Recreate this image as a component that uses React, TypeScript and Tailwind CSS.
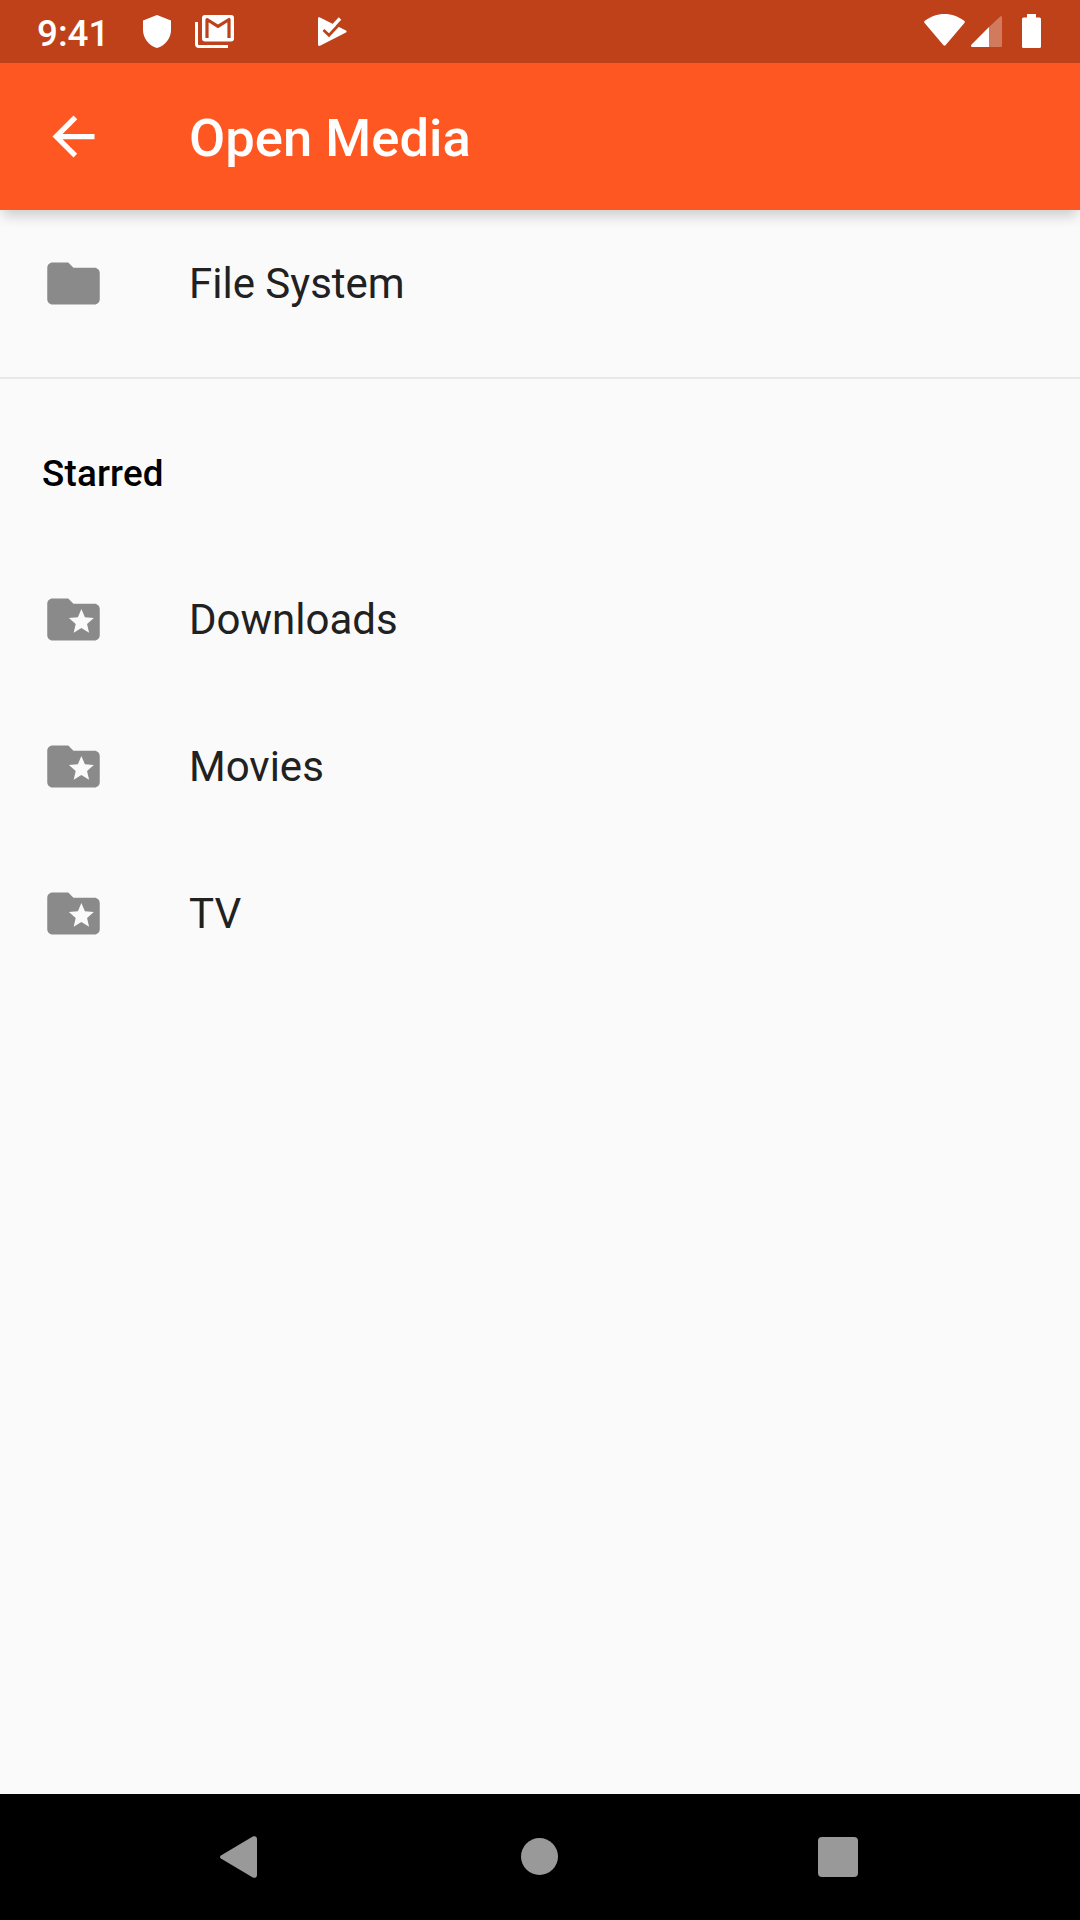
import { MdArrowBack, MdFolder, MdFolderSpecial } from 'react-icons/md';

const STARRED = ['Downloads', 'Movies', 'TV'];

interface MediaRowProps {
  label: string;
  starred?: boolean;
}

function MediaRow({ label, starred }: MediaRowProps) {
  const Icon = starred ? MdFolderSpecial : MdFolder;

  return (
    <li className="h-[147px] flex items-center pl-[42px]">
      <Icon className="size-[63px] shrink-0 text-[#8a8a8a]" />
      <span className="ml-[84px] text-[42px] leading-[49px] text-[#212121]">{label}</span>
    </li>
  );
}

function StatusBar() {
  return (
    <div className="h-[63px] bg-[#bf4119] flex items-start text-white">
      <span className="ml-[37px] mt-3 w-[106px] text-[36.75px] leading-[43px] font-medium">9:41</span>

      {/* Shield */}
      <svg className="mt-[15px] w-7 h-[33px]" viewBox="0 0 28 33" fill="currentColor">
        <path d="M14 0 28 5.6V15C28 23.5 22 30.8 14 33 6 30.8 0 23.5 0 15V5.6Z" />
      </svg>

      {/* Gmail */}
      <svg className="ml-6 mt-[15px] w-[39px] h-[33px]" viewBox="0 0 39 33" fill="none">
        <path d="M1.5 7V29a2.5 2.5 0 0 0 2.5 2.5H33" stroke="currentColor" strokeWidth="3" />
        <rect x="7" y="0" width="32" height="26.5" rx="3" fill="currentColor" />
        <path d="M12 23V4.5L23 11.3 34 4.5V23" stroke="#bf4119" strokeWidth="3.2" strokeLinejoin="round" />
      </svg>

      {/* Play */}
      <svg className="ml-[84px] mt-[17px] w-[29px] h-[29px]" viewBox="0 0 29 29" fill="none">
        <path d="M0 1.5C0 .3 1 0 2 .4L27.5 13.3C29 14 29 15 27.5 15.8L2 28.8C1 29.2 0 28.8 0 27.5Z" fill="currentColor" />
        <path d="M10.5 14 22 1.5" stroke="currentColor" strokeWidth="3.4" />
        <path d="M5.5 13 11 18.2 23 5.5" stroke="#bf4119" strokeWidth="2.8" />
      </svg>

      <div className="ml-auto flex items-start">
        {/* Wifi */}
        <svg className="mt-[14px] w-[41px] h-8" viewBox="0 0 41 32" fill="currentColor">
          <path d="M.6 9C-.1 8.2 0 7.4.9 6.8 6.5 2.5 13.3 0 20.5 0S34.5 2.5 40.1 6.8C41 7.4 41.1 8.2 40.4 9L21.7 31C21 31.9 20 31.9 19.3 31Z" />
        </svg>

        {/* Signal */}
        <svg className="ml-1.5 mt-4 w-[31px] h-[31px]" viewBox="0 0 31 31" fill="currentColor">
          <path d="M18 11 29 .7C30 0 31 .3 31 1.5V29.5Q31 31 29.5 31H18Z" opacity="0.3" />
          <path d="M18 11V31H1.5C0 31-.4 29.5.6 28.5Z" />
        </svg>

        {/* Battery */}
        <svg className="ml-5 mr-[39px] mt-[14px] w-[19px] h-[34px]" viewBox="0 0 19 34" fill="currentColor">
          <rect x="5" width="9" height="5" />
          <rect y="3.5" width="19" height="30.5" rx="1.5" />
        </svg>
      </div>
    </div>
  );
}

function NavBar() {
  return (
    <nav className="h-[126px] bg-black flex items-center text-[#999999]">
      <svg className="ml-[220px] w-[37px] h-[42px]" viewBox="0 0 37 42" fill="currentColor">
        <path d="M.9 19.4 32.8.6C35-.5 37 .5 37 3V39C37 41.5 35 42.5 32.8 41.4L.9 22.6C-.3 21.8-.3 20.2.9 19.4Z" />
      </svg>
      <div className="ml-[264px] mb-px size-[37px] rounded-full bg-[#999999]" />
      <div className="ml-[260px] size-10 rounded-[4px] bg-[#999999]" />
    </nav>
  );
}

export default function App() {
  return (
    <div className="w-[1080px] h-[1920px] flex flex-col bg-[#fafafa] overflow-hidden font-['Roboto',sans-serif]">
      <header className="relative z-10 shadow-[0_9px_12px_-3px_rgba(0,0,0,0.18)]">
        <StatusBar />
        <div className="h-[147px] bg-[#ff5722] flex items-center pl-[42px] text-white">
          <MdArrowBack className="size-[63px]" />
          <h1 className="ml-[84px] pt-0.5 text-[52.5px] leading-[62px] font-medium tracking-[0.05px]">Open Media</h1>
        </div>
      </header>

      <main className="flex-1">
        <ul>
          <MediaRow label="File System" />
        </ul>
        <hr className="mt-5 mb-5 h-0.5 border-0 bg-[#e8e8e8]" />
        <h2 className="h-[147px] flex items-center pl-[42px] pt-0.5 text-[36.75px] font-medium tracking-[0.2px] text-black">Starred</h2>
        <ul>
          {STARRED.map((name) => (
            <MediaRow key={name} label={name} starred />
          ))}
        </ul>
      </main>

      <NavBar />
    </div>
  );
}
